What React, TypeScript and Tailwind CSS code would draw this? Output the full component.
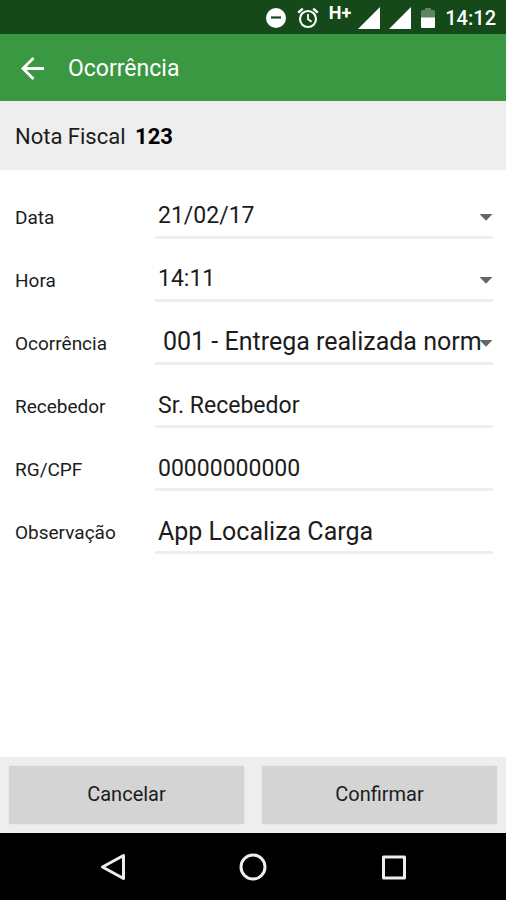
import { useState } from 'react'
import type { ReactNode } from 'react'

function StatusBar() {
  return (
    <div className="flex h-[34px] items-center justify-end bg-[#15491a] pt-[2px] pr-[10px] text-white">
      <svg className="mr-[10px] h-[20px] w-[22px]" viewBox="0 0 22 20" aria-hidden="true">
        <circle cx="11" cy="10" r="10" fill="currentColor" />
        <path d="M6 9.500h10" stroke="#15491a" strokeWidth="2.2" />
      </svg>
      <svg className="mr-[10px] h-[22px] w-[22px]" viewBox="0 0 22 22" fill="none" stroke="currentColor" aria-hidden="true">
        <circle cx="11" cy="12" r="8" strokeWidth="2.2" />
        <path d="M11 7v5.2l3.6 2.6" strokeWidth="1.8" />
        <path d="M1.2 5.6 5.8 1.6M20.800 5.600l-4.600-4" strokeWidth="2.4" />
      </svg>
      <span className="mr-[7px] pb-[10px] text-[18px] leading-5 font-bold">H+</span>
      <svg className="mr-[9px] h-[22px] w-[22px]" viewBox="0 0 22 22" aria-hidden="true">
        <path d="M22 0v22H0z" fill="currentColor" />
      </svg>
      <svg className="mr-[10px] h-[22px] w-[22px]" viewBox="0 0 22 22" aria-hidden="true">
        <path d="M22 0v22H0z" fill="currentColor" />
      </svg>
      <svg className="mr-[10px] h-[20px] w-[14px]" viewBox="0 0 14 20" aria-hidden="true">
        <path d="M0 3q0-1 1-1h3V0h6v2h3q1 0 1 1v7H0z" fill="#5f8562" />
        <path d="M0 9.500h14V19q0 1-1 1H1q-1 0-1-1z" fill="currentColor" />
      </svg>
      <span className="text-[20px] leading-6 font-medium">14:12</span>
    </div>
  )
}

function Caret() {
  return (
    <svg className="pointer-events-none absolute top-[24px] right-0 h-[7px] w-[14px]" viewBox="0 0 14 7" aria-hidden="true">
      <path d="M0.500 0h13L7 6.800z" fill="#666" />
    </svg>
  )
}

function Row({ id, label, children }: { id: string; label: string; children: ReactNode }) {
  return (
    <div className="flex h-[63px] items-end">
      <label htmlFor={id} className="w-[140px] shrink-0 pb-[9px] text-[19px] leading-6">
        {label}
      </label>
      <div className="relative min-w-0 flex-1 border-b-[3px] border-[#eeeeee]">{children}</div>
    </div>
  )
}

const control = 'block h-[46px] w-full appearance-none bg-transparent pt-[6px] leading-7 outline-none'

export default function App() {
  const [recebedor, setRecebedor] = useState('Sr. Recebedor')
  const [documento, setDocumento] = useState('00000000000')
  const [observacao, setObservacao] = useState('App Localiza Carga')

  return (
    <div className="flex min-h-screen flex-col bg-white font-[Roboto,sans-serif] text-[#1c1c1c]">
      <StatusBar />
      <header className="flex h-[67px] items-center bg-[#3a9742] pt-[2px] pl-[21px] text-white">
        <button type="button" aria-label="Voltar" className="mr-[23px]">
          <svg className="h-6 w-6" viewBox="0 0 24 24" fill="none" stroke="currentColor" strokeWidth="2.8" aria-hidden="true">
            <path d="M23 11.500H3M12.500 1 2 11.500l10.500 10.500" />
          </svg>
        </button>
        <h1 className="text-[23px] leading-7">Ocorrência</h1>
      </header>
      <div className="flex h-[69px] items-center bg-[#eeeeee] px-[15px] pt-[2px] text-[22px] leading-7">
        <p>
          Nota Fiscal <strong className="ml-[4px] font-bold text-black">123</strong>
        </p>
      </div>

      <form id="ocorrencia-form" className="flex-1 pt-[6px] pr-[13px] pl-[15px]" onSubmit={(event) => event.preventDefault()}>
        <Row id="data" label="Data">
          <select id="data" className={`${control} pl-[3px] text-[23px]`}>
            <option>21/02/17</option>
          </select>
          <Caret />
        </Row>
        <Row id="hora" label="Hora">
          <select id="hora" className={`${control} pl-[3px] text-[23px]`}>
            <option>14:11</option>
          </select>
          <Caret />
        </Row>
        <Row id="ocorrencia" label="Ocorrência">
          <select id="ocorrencia" className={`${control} pl-[8px] text-[25px]`}>
            <option>001 - Entrega realizada norm</option>
          </select>
          <Caret />
        </Row>
        <Row id="recebedor" label="Recebedor">
          <input
            id="recebedor"
            className={`${control} pl-[3px] text-[23px]`}
            value={recebedor}
            onChange={(event) => setRecebedor(event.target.value)}
          />
        </Row>
        <Row id="documento" label="RG/CPF">
          <input
            id="documento"
            className={`${control} pl-[3px] text-[23px]`}
            value={documento}
            onChange={(event) => setDocumento(event.target.value)}
          />
        </Row>
        <Row id="observacao" label="Observação">
          <input
            id="observacao"
            className={`${control} pl-[3px] text-[25px]`}
            value={observacao}
            onChange={(event) => setObservacao(event.target.value)}
          />
        </Row>
      </form>

      <div className="grid grid-cols-2 gap-[18px] bg-[#eeeeee] p-[9px] text-[20px] leading-6">
        <button type="button" className="h-[58px] rounded-[2px] bg-[#d4d4d4] pb-[2px] shadow-[0_0_1px_#bbb]">
          Cancelar
        </button>
        <button type="submit" form="ocorrencia-form" className="h-[58px] rounded-[2px] bg-[#d4d4d4] pb-[2px] shadow-[0_0_1px_#bbb]">
          Confirmar
        </button>
      </div>

      <nav className="flex h-[67px] items-center justify-center gap-[112px] bg-black text-[#eeeeee]">
        <button type="button" aria-label="Voltar">
          <svg className="h-7 w-7" viewBox="0 0 28 28" fill="none" stroke="currentColor" strokeWidth="3" strokeLinejoin="round" aria-hidden="true">
            <path d="M24.500 2.500v23L3.500 14z" />
          </svg>
        </button>
        <button type="button" aria-label="Início">
          <svg className="h-7 w-7" viewBox="0 0 28 28" fill="none" stroke="currentColor" strokeWidth="3" aria-hidden="true">
            <circle cx="14" cy="14" r="12" />
          </svg>
        </button>
        <button type="button" aria-label="Recentes">
          <svg className="h-7 w-7" viewBox="0 0 28 28" fill="none" stroke="currentColor" strokeWidth="3" strokeLinejoin="round" aria-hidden="true">
            <path d="M4.500 4h21v21h-21z" />
          </svg>
        </button>
      </nav>
    </div>
  )
}
